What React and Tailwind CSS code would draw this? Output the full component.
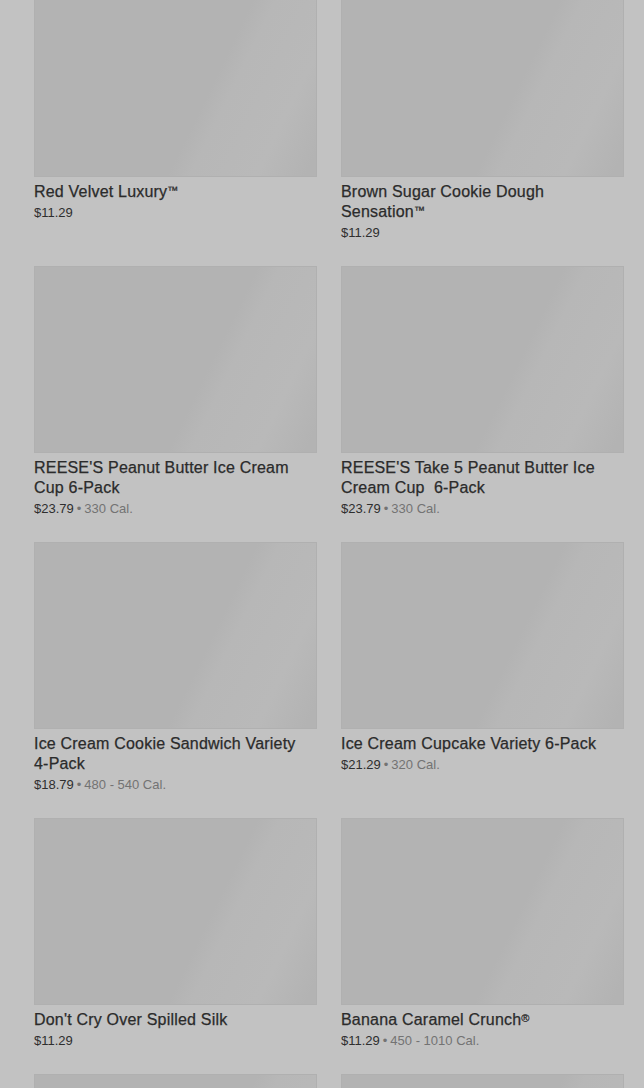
const items = [
  { name: 'Red Velvet Luxury', mark: '™', price: '$11.29' },
  { name: 'Brown Sugar Cookie Dough Sensation', mark: '™', price: '$11.29' },
  { name: "REESE'S Peanut Butter Ice Cream Cup 6\u2011Pack", price: '$23.79', cal: '330 Cal.' },
  { name: "REESE'S Take 5 Peanut Butter Ice Cream Cup\u00a0 6\u2011Pack", price: '$23.79', cal: '330 Cal.' },
  { name: 'Ice Cream Cookie Sandwich Variety 4\u2011Pack', price: '$18.79', cal: '480 - 540 Cal.' },
  { name: 'Ice Cream Cupcake Variety 6\u2011Pack', price: '$21.29', cal: '320 Cal.' },
  { name: "Don't Cry Over Spilled Silk", price: '$11.29' },
  { name: 'Banana Caramel Crunch', mark: '®', price: '$11.29', cal: '450 - 1010 Cal.' },
  // last row is only peeking in at the bottom
  { name: 'peek-1' },
  { name: 'peek-2' },
]

// skeleton image block with the diagonal shimmer band
function Placeholder() {
  return (
    <div className="h-[187px] w-full border border-[#b0b0b0] bg-[linear-gradient(116deg,#b3b3b3_0%,#b3b3b3_60%,#b7b7b7_66%,#b9b9b9_84%,#b3b3b3_97%)]" />
  )
}

function ItemCard({ item }) {
  if (!item.price) return <Placeholder />
  return (
    <div className="flex flex-col">
      <Placeholder />
      <div className="mt-[5px] h-auto text-[16px] leading-5 tracking-[0.2px] text-[#2b2b2b] [-webkit-text-stroke:0.25px_#2b2b2b]">
        {item.name}
        {item.mark && (
          <span className="relative -top-[3px] text-[11px] leading-[0]">{item.mark}</span>
        )}
      </div>
      <div className="pt-px text-[13px] leading-5 text-[#2e2e2e]">
        {item.price}
        {item.cal && (
          <span className="text-[#737373]">
            <span className="mx-[3px]">•</span>
            {item.cal}
          </span>
        )}
      </div>
    </div>
  )
}

export default function App() {
  return (
    <div
      className="h-[1088px] overflow-hidden bg-[#c2c2c2]"
      style={{ fontFamily: '"Liberation Sans", Arial, sans-serif' }}
    >
      <div className="-mt-[10px] grid grid-cols-2 gap-x-6 gap-y-[23px] pl-[34px] pr-5">
        {items.map((item) => (
          <ItemCard key={item.name} item={item} />
        ))}
      </div>
    </div>
  )
}
